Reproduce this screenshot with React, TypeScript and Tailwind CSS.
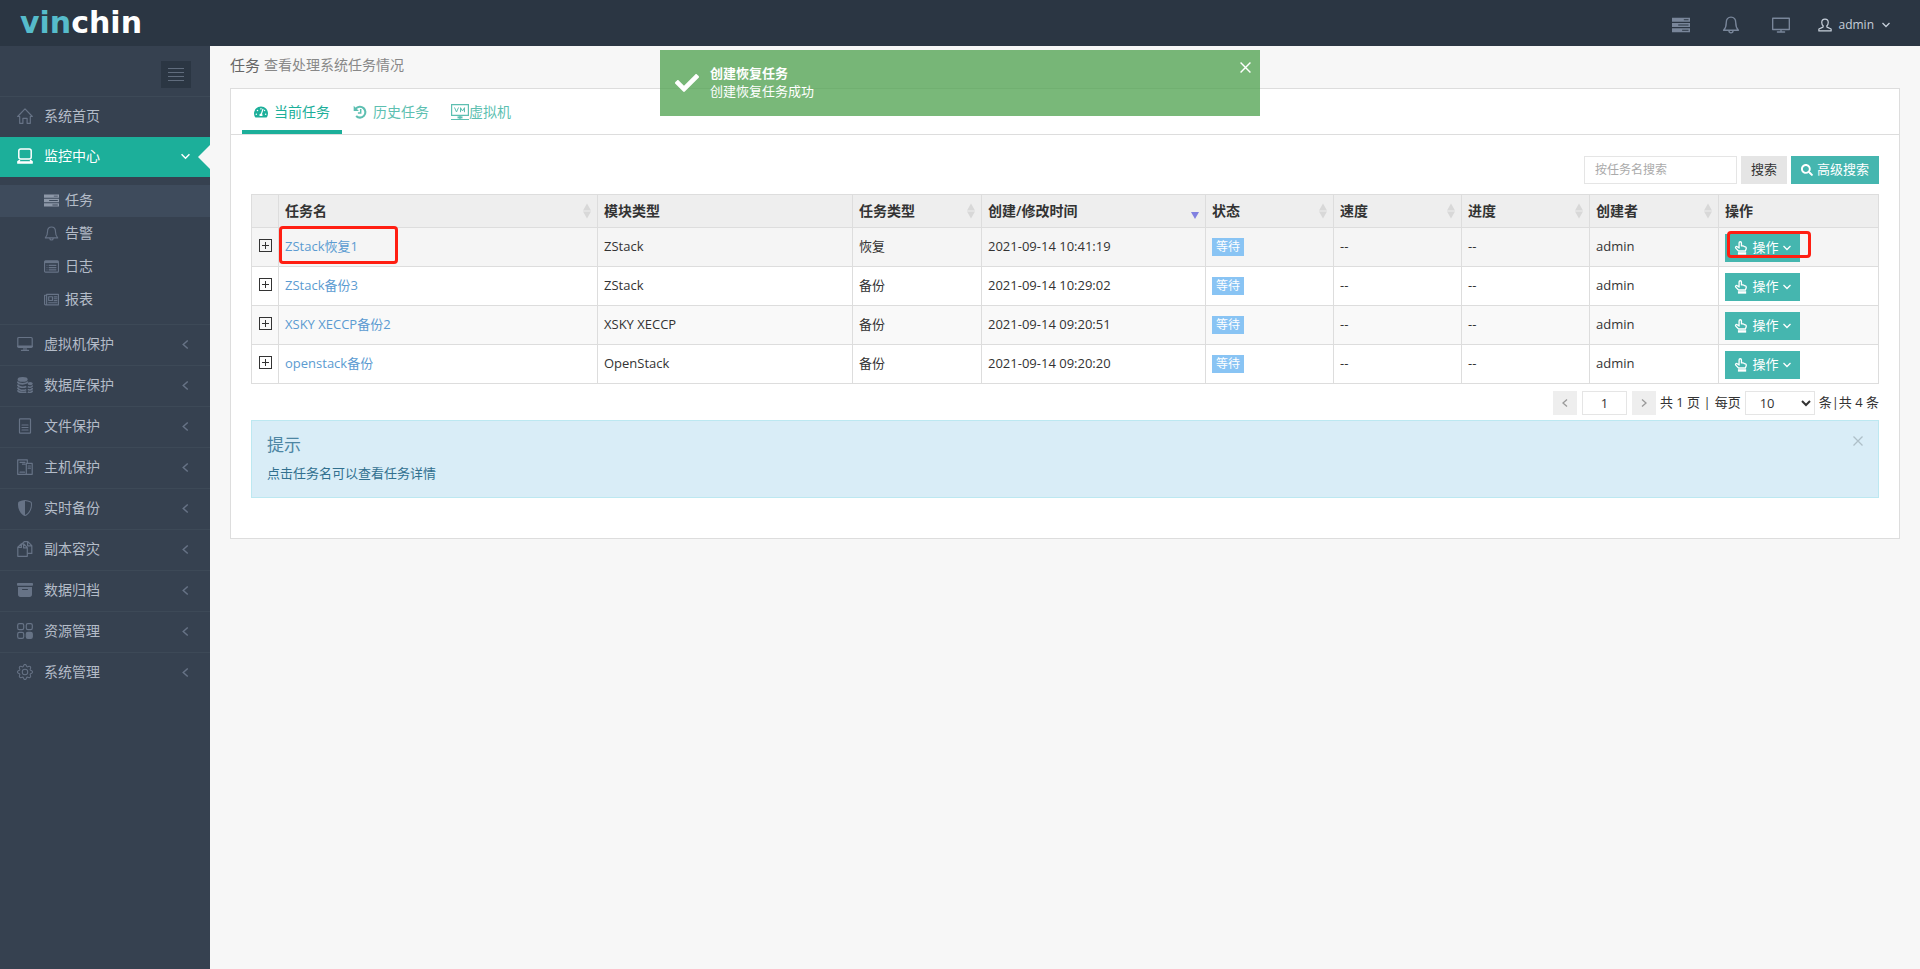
import React from "react";
import { BsArchiveFill, BsGear, BsShieldShaded } from "react-icons/bs";
import { FaCheck, FaSearch, FaTachometerAlt } from "react-icons/fa";

type IconProps = { className?: string };
type IconType = (props: IconProps) => React.ReactElement;

const Svg = ({
  className = "size-4",
  children,
}: IconProps & { children: React.ReactNode }) => (
  <svg
    viewBox="0 0 16 16"
    className={className}
    fill="none"
    stroke="currentColor"
    strokeWidth="1.2"
    strokeLinejoin="round"
    strokeLinecap="round"
    aria-hidden="true"
  >
    {children}
  </svg>
);

const HomeIcon: IconType = (p) => (
  <Svg {...p}>
    <path d="M8 .9.7 8.5h2v6.8h3.2v-5h4.2v5h3.2V8.5h2z" />
  </Svg>
);

const LaptopIcon: IconType = (p) => (
  <Svg {...p}>
    <rect x="1.8" y="1" width="12.4" height="10" rx="2" strokeWidth="1.5" />
    <path d="M2.6 12.4.8 13.6v1.6h14.4v-1.6l-1.800-1.200M1 13.800h14" strokeWidth="1.3" />
  </Svg>
);

const ServerIcon: IconType = (p) => (
  <Svg {...p}>
    <path
      fill="currentColor"
      fillRule="evenodd"
      stroke="none"
      d="M0 1.5h16v3.6H0zM10.5 2.8v1h4.2v-1zM0 6.2h16v3.6H0zM5.5 7.5v1h9.2v-1zM0 10.9h16v3.6H0zM9 12.2v1h5.7v-1z"
    />
  </Svg>
);

const BellIcon: IconType = (p) => (
  <Svg {...p}>
    <path d="M8 1C5.2 1 3.8 3.1 3.8 5.7c0 3.4-.6 5.2-2.4 7h13.2c-1.8-1.8-2.4-3.6-2.4-7C12.2 3.1 10.8 1 8 1zM6.2 13.2a1.8 1.8 0 0 0 3.6 0" />
  </Svg>
);

const ScreenIcon: IconType = (p) => (
  <Svg {...p}>
    <path d="M.6 2h14.8v10H.6zM8 12v2M4.8 14.2h6.4" />
  </Svg>
);

const MonitorIcon: IconType = (p) => (
  <Svg {...p}>
    <rect x=".8" y="1.5" width="14.4" height="9.8" rx="1" />
    <path d="M1 10.3h14" strokeWidth="1.8" />
    <path d="M7 11.5v2.6M9 11.5v2.6M4.5 14.4h7" />
  </Svg>
);

const LogIcon: IconType = (p) => (
  <Svg {...p}>
    <rect x=".6" y="2" width="14.8" height="12" rx="1" />
    <path d="M1 3.2h14" strokeWidth="2.4" strokeLinecap="butt" />
    <path d="M2.8 6.8h.8M5 6.8h8.2M2.8 9.2h.8M5 9.2h8.2M2.8 11.6h.8M5 11.6h8.2" strokeLinecap="butt" />
  </Svg>
);

const ReportIcon: IconType = (p) => (
  <Svg {...p}>
    <path d="M2.8 2.5h12.6v11.2H1.8A1.2 1.2 0 0 1 .6 12.5v-9h2.2zM2.8 3.5v9.2M5 5h4v4H5zM10.8 5.2h3M10.8 7.2h3M10.8 9.2h3M5 11.4h8.8" />
  </Svg>
);

const DatabaseIcon: IconType = (p) => (
  <svg viewBox="0 0 16 16" className={p.className} fill="none" stroke="currentColor" aria-hidden="true">
    <ellipse cx="5.6" cy="2.4" rx="5" ry="2.3" fill="currentColor" stroke="none" />
    <path
      d="M.5 4.6c1 3 9.200 3 10.200 0M.5 7.600c1 3 6 3.200 8.800 1.900M.5 10.600c1 3 5.500 3.200 8.800 2.200M.5 13.300c1 2.400 5.500 2.600 8.800 1.800"
      strokeWidth="1.600"
    />
    <ellipse cx="13.200" cy="6.600" rx="2.600" ry="1.600" fill="currentColor" stroke="none" />
    <path d="M10.800 9.700c1.800 1.200 4.200.4 4.800-1.300M10.800 12.300c1.800 1.200 4.200.4 4.800-1.300M10.800 14.900c1.800 1.200 4.200.4 4.800-1.300" strokeWidth="1.500" />
  </svg>
);

const FileIcon: IconType = (p) => (
  <Svg {...p}>
    <rect x="2.5" y=".8" width="11" height="14.4" rx=".8" />
    <path d="M5 7h6M5 9.5h6M5 12h6" />
  </Svg>
);

const HostIcon: IconType = (p) => (
  <Svg {...p}>
    <path d="M9.5 15.3H.7V.8h9.6v3.4M3 3.3h5M5.5 5.2H8M3 13.2h4.5M9.3 4.4h5.9v10.9H9.3zM11.2 7h2.2M11.2 9.2h2.2" />
  </Svg>
);

// back sheet, then the front sheet, each with its folded corner
const CopyIcon: IconType = (p) => (
  <Svg {...p}>
    <path d="M5.2 2.8v-.2L7.200.7h3.600l4 4v7.700h-4.300M10.600.9v4h4" />
    <path d="M4.200 2.900h2.600l3.500 3.800v8.600H.8V6.200zM4.400 3.200v3.200H1M6.600 3.200v3.700h3.500" />
  </Svg>
);

const GridIcon: IconType = (p) => (
  <Svg {...p}>
    <rect x=".7" y=".7" width="6" height="6" rx="1.6" />
    <rect x="9.3" y=".7" width="6" height="6" rx="1.6" />
    <rect x=".7" y="9.3" width="6" height="6" rx="1.6" />
    <rect x="9.3" y="9.3" width="6" height="6" rx="1.6" fill="currentColor" />
  </Svg>
);

const UserIcon: IconType = (p) => (
  <Svg {...p}>
    <path
      d="M8 1.2c-2.3 0-3.7 1.7-3.7 3.9 0 1.8.7 3 1.7 4l-.3 1.3L1 12.6v2.2h14v-2.2l-4.7-2.2L10 9.1c1-1 1.7-2.2 1.7-4C11.7 2.9 10.3 1.2 8 1.2z"
      strokeWidth="1.4"
    />
  </Svg>
);

const HistoryIcon: IconType = (p) => (
  <svg viewBox="0 0 16 16" className={p.className} fill="none" stroke="currentColor" aria-hidden="true">
    <path d="M3.2 4.2A6.2 6.2 0 1 1 3.6 12.6" strokeWidth="2.4" />
    <path d="M.8.8v6h6z" fill="currentColor" stroke="none" />
    <path d="M8.8 4.5v4.7H5.6" strokeWidth="1.7" />
  </svg>
);

const HandIcon: IconType = (p) => (
  <svg
    viewBox="0 0 16 16"
    className={p.className}
    fill="none"
    stroke="currentColor"
    strokeWidth="1.5"
    strokeLinejoin="round"
    aria-hidden="true"
  >
    <path d="M5.2 11.4 2 8.1C1.2 7 2.6 5.7 3.8 6.6L5.8 8V2.2c0-1.8 2.7-1.8 2.7 0v3.4c2.2-.3 3 .2 3.2.8 1.6-.1 2.3.7 2.3 1.8 0 1.4-.9 2-.9 3.2z" />
    <path d="M4.5 14.2h9.4" strokeWidth="2.8" />
  </svg>
);

const VmIcon: IconType = (p) => (
  <svg
    viewBox="0 0 18 18"
    className={p.className}
    fill="none"
    stroke="currentColor"
    aria-hidden="true"
  >
    <path d="M.6 1.6h16.8v10.8H.6zM0 16.5h18M9 13v3" strokeWidth="1.2" />
    <path d="M6.5 14.4h5" strokeWidth="2" />
    <path d="M3.5 4.5 5.5 9l2-4.500M9.500 9.200V4.700l2 3.300 2-3.300v4.500" />
  </svg>
);

const Chevron = ({
  dir,
  className = "size-2",
}: IconProps & { dir: "left" | "right" | "down" }) => {
  const paths = {
    left: "M6 .5 2 4l4 3.5",
    right: "M2 .5 6 4 2 7.5",
    down: "M.5 2 4 5.5 7.5 2",
  };
  return (
    <svg
      viewBox="0 0 8 8"
      className={className}
      fill="none"
      stroke="currentColor"
      strokeWidth="1.3"
      aria-hidden="true"
    >
      <path d={paths[dir]} />
    </svg>
  );
};

const Cross = ({ className }: IconProps) => (
  <svg viewBox="0 0 10 10" className={className} fill="none" stroke="currentColor" strokeWidth="1.3" aria-hidden="true">
    <path d="m.5.5 9 9M9.5.5l-9 9" />
  </svg>
);

const subMenu: { label: string; Icon: IconType; active?: boolean }[] = [
  { label: "任务", Icon: ServerIcon, active: true },
  { label: "告警", Icon: BellIcon },
  { label: "日志", Icon: LogIcon },
  { label: "报表", Icon: ReportIcon },
];

const menu: { label: string; Icon: React.ElementType }[] = [
  { label: "虚拟机保护", Icon: MonitorIcon },
  { label: "数据库保护", Icon: DatabaseIcon },
  { label: "文件保护", Icon: FileIcon },
  { label: "主机保护", Icon: HostIcon },
  { label: "实时备份", Icon: BsShieldShaded },
  { label: "副本容灾", Icon: CopyIcon },
  { label: "数据归档", Icon: BsArchiveFill },
  { label: "资源管理", Icon: GridIcon },
  { label: "系统管理", Icon: BsGear },
];

const columns: { label: string; width: string; sort?: "both" | "desc" }[] = [
  { label: "任务名", width: "", sort: "both" },
  { label: "模块类型", width: "w-[255px]" },
  { label: "任务类型", width: "w-[129px]", sort: "both" },
  { label: "创建/修改时间", width: "w-56", sort: "desc" },
  { label: "状态", width: "w-32", sort: "both" },
  { label: "速度", width: "w-32", sort: "both" },
  { label: "进度", width: "w-32", sort: "both" },
  { label: "创建者", width: "w-[129px]", sort: "both" },
  { label: "操作", width: "w-40" },
];

const tasks = [
  { name: "ZStack恢复1", module: "ZStack", type: "恢复", time: "2021-09-14 10:41:19", bg: "bg-[#f5f5f5]", marked: true },
  { name: "ZStack备份3", module: "ZStack", type: "备份", time: "2021-09-14 10:29:02", bg: "bg-white" },
  { name: "XSKY XECCP备份2", module: "XSKY XECCP", type: "备份", time: "2021-09-14 09:20:51", bg: "bg-[#f9f9f9]" },
  { name: "openstack备份", module: "OpenStack", type: "备份", time: "2021-09-14 09:20:20", bg: "bg-white" },
];

const Header = () => (
  <header className="flex h-[46px] shrink-0 items-center justify-between bg-[#2b3643] pl-5 pr-[30px]">
    <a
      href="#"
      className="font-['DejaVu_Sans'] text-[30px] font-bold leading-none text-white"
    >
      <span className="text-[#56bccb]">vin</span>chin
    </a>
    <div className="flex items-center gap-8 pb-1 pt-2 text-[#79869a]">
      <button aria-label="任务">
        <ServerIcon className="size-[18px]" />
      </button>
      <button aria-label="告警">
        <BellIcon className="size-[18px]" />
      </button>
      <button aria-label="大屏">
        <ScreenIcon className="size-[18px]" />
      </button>
      <button className="-ml-1 flex items-center text-[#c6cfda]">
        <UserIcon className="mr-1.5 size-3.5" />
        <span className="text-xs">admin</span>
        <Chevron dir="down" className="ml-2 size-2" />
      </button>
    </div>
  </header>
);

const Sidebar = () => (
  <nav className="w-[210px] shrink-0 bg-[#364150] text-sm text-[#b4bcc8]">
    <div className="flex justify-end pb-2 pr-[19px] pt-[15px]">
      <button
        aria-label="菜单"
        className="flex h-[27px] w-[30px] flex-col items-center justify-center gap-[3px] bg-[#2b3643]"
      >
        <span className="h-px w-4 bg-[#606c7d]" />
        <span className="h-px w-4 bg-[#606c7d]" />
        <span className="h-px w-4 bg-[#606c7d]" />
        <span className="h-px w-4 bg-[#606c7d]" />
      </button>
    </div>
    <a href="#" className="flex h-[41px] items-center border-t border-[#3d4957] pb-0.5 pl-[17px]">
      <HomeIcon className="mr-[11px] size-4 text-[#677386]" />
      系统首页
    </a>
    <a href="#" className="relative flex h-10 items-center bg-[#1caf9a] pb-0.5 pl-[17px] text-white">
      <LaptopIcon className="mr-[11px] size-4" />
      监控中心
      <Chevron dir="down" className="ml-auto mr-5 size-[9px]" />
      <span className="absolute right-0 top-2 h-6 w-3 bg-[#f7f7f7] [clip-path:polygon(100%_0,100%_100%,0_50%)]" />
    </a>
    <ul className="pb-[7px] pt-2">
      {subMenu.map(({ label, Icon, active }) => (
        <li key={label} className="pb-px">
          <a
            href="#"
            className={
              active
                ? "flex h-8 items-center bg-[#3e4b5c] pb-0.5 pl-11"
                : "flex h-8 items-center pb-0.5 pl-11"
            }
          >
            <Icon
              className={
                active ? "mr-1.5 size-[15px] text-[#8d98a8]" : "mr-1.5 size-[15px] text-[#677386]"
              }
            />
            {label}
          </a>
        </li>
      ))}
    </ul>
    {menu.map(({ label, Icon }) => (
      <a
        key={label}
        href="#"
        className="flex h-[41px] items-center border-t border-[#3d4957] pb-0.5 pl-[17px]"
      >
        <Icon className="mr-[11px] size-4 text-[#677386]" />
        {label}
        <Chevron dir="left" className="ml-auto mr-5 size-[9px] text-[#677386]" />
      </a>
    ))}
  </nav>
);

const SortMark = ({ sort }: { sort: "both" | "desc" }) => (
  <svg viewBox="0 0 8 16" className="h-4 w-2 shrink-0" aria-hidden="true">
    {sort === "both" && (
      <>
        <path d="M4 .5 8 7.5H0z" fill="#d8d8d8" />
        <path d="M4 15.5 8 8.5H0z" fill="#d8d8d8" />
      </>
    )}
    {sort === "desc" && <path d="M4 16 8 9H0z" fill="#8080e0" />}
  </svg>
);

const TaskTable = () => (
  <table className="w-full table-fixed border-collapse text-[13px] text-[#333]">
    <thead>
      <tr className="h-[33px] bg-[#eee] text-left text-sm">
        <th className="w-[27px] border border-[#ddd]" />
        {columns.map(({ label, width, sort }) => (
          <th key={label} className={`border border-[#ddd] px-1.5 font-semibold ${width}`}>
            <div className="flex items-center justify-between">
              {label}
              {sort && <SortMark sort={sort} />}
            </div>
          </th>
        ))}
      </tr>
    </thead>
    <tbody>
      {tasks.map((task) => (
        <tr key={task.name} className={`h-[39px] ${task.bg}`}>
          <td className="border border-[#ddd]">
            <button
              aria-label="展开"
              className="mx-auto mb-1 flex size-[13px] items-center justify-center border border-[#333]"
            >
              <svg viewBox="0 0 7 7" className="size-[7px]" stroke="#333" aria-hidden="true">
                <path d="M0 3.5h7M3.5 0v7" />
              </svg>
            </button>
          </td>
          <td className="relative border border-[#ddd] px-1.5">
            <a href="#" className="text-[#5b9bd1]">
              {task.name}
            </a>
            {task.marked && (
              <span className="absolute -top-0.5 left-0 h-[38px] w-[119px] rounded border-3 border-[#ff1e12]" />
            )}
          </td>
          <td className="border border-[#ddd] px-1.5">{task.module}</td>
          <td className="border border-[#ddd] px-1.5">{task.type}</td>
          <td className="border border-[#ddd] px-1.5">{task.time}</td>
          <td className="border border-[#ddd] px-1.5">
            <span className="flex h-[18px] w-8 items-center justify-center bg-[#89c4f4] text-xs text-white">
              等待
            </span>
          </td>
          <td className="border border-[#ddd] px-1.5">--</td>
          <td className="border border-[#ddd] px-1.5">--</td>
          <td className="border border-[#ddd] px-1.5">admin</td>
          <td className="relative border border-[#ddd] px-1.5">
            <button className="mt-px flex h-7 w-[75px] items-center justify-center gap-1 bg-[#45b6af] text-white">
              <HandIcon className="size-3.5" />
              操作
              <Chevron dir="down" className="size-2" />
            </button>
            {task.marked && (
              <span className="absolute left-2 top-[3px] h-[27px] w-[84px] rounded border-3 border-[#ff1e12]" />
            )}
          </td>
        </tr>
      ))}
    </tbody>
  </table>
);

const Pagination = () => (
  <div className="mt-[7px] flex h-6 items-center justify-end text-[13px] text-[#333]">
    <button aria-label="上一页" className="flex h-6 w-6 items-center justify-center bg-[#eee] text-[#999]">
      <Chevron dir="left" />
    </button>
    <input
      aria-label="页码"
      defaultValue="1"
      className="mx-[5px] h-6 w-[45px] border border-[#e5e5e5] bg-white text-center"
    />
    <button aria-label="下一页" className="mr-1 flex h-6 w-6 items-center justify-center bg-[#eee] text-[#999]">
      <Chevron dir="right" />
    </button>
    <span>共 1 页 |</span>
    <label htmlFor="page-size" className="mx-1">
      每页
    </label>
    <select
      id="page-size"
      defaultValue="10"
      className="mr-1 h-6 w-[70px] border border-[#e5e5e5] bg-white pl-2.5"
    >
      <option>10</option>
      <option>20</option>
      <option>50</option>
    </select>
    <span>条|共 4 条</span>
  </div>
);

const Toast = () => (
  <div
    role="status"
    className="absolute left-1/2 top-[50px] flex h-[66px] w-[600px] -translate-x-1/2 items-center bg-[#51a351]/77 pl-[15px] text-[13px] leading-[18px] text-white"
  >
    <FaCheck className="mr-[11px] size-6" />
    <div className="pb-0.5">
      <div className="font-bold">创建恢复任务</div>
      <div>创建恢复任务成功</div>
    </div>
    <button aria-label="关闭" className="absolute right-[9px] top-3">
      <Cross className="size-[11px]" />
    </button>
  </div>
);

const App = () => {
  return (
    <div className="relative flex min-h-screen flex-col bg-[#f7f7f7] font-['Open_Sans','Noto_Sans_CJK_SC',sans-serif]">
      <Header />
      <div className="flex grow">
        <Sidebar />
        <main className="min-w-0 grow px-5">
          <h1 className="flex h-[42px] items-center gap-1 pb-1 text-[15px] text-[#666]">
            任务
            <small className="text-sm text-[#888]">查看处理系统任务情况</small>
          </h1>
          <section className="border border-[#ddd] bg-white">
            <div className="flex h-[46px] border-b border-[#ddd] pl-[11px] text-sm text-[#5dbfb1]">
              <a
                href="#"
                className="flex items-center gap-1.5 border-b-4 border-[#1caf9a] px-3 pt-1 text-[#1caf9a]"
              >
                <FaTachometerAlt className="size-3.5" />
                当前任务
              </a>
              <a href="#" className="flex items-center gap-1.5 px-[11px]">
                <HistoryIcon className="size-3.5" />
                历史任务
              </a>
              <a href="#" className="flex items-center px-[11px]">
                <VmIcon className="size-[18px]" />
                虚拟机
              </a>
            </div>
            <div className="px-5 pb-10 pt-[21px]">
              <form className="mb-2.5 flex h-7 justify-end gap-1 text-[13px]">
                <input
                  type="text"
                  aria-label="按任务名搜索"
                  placeholder="按任务名搜索"
                  className="w-[153px] border border-[#e5e5e5] px-2.5 text-xs placeholder:text-[#aaa]"
                />
                <button type="button" className="w-[46px] bg-[#e5e5e5] text-[#333]">
                  搜索
                </button>
                <button
                  type="button"
                  className="flex w-[88px] items-center justify-center gap-1 bg-[#45b6af] text-white"
                >
                  <FaSearch className="size-3" />
                  高级搜索
                </button>
              </form>
              <TaskTable />
              <Pagination />
              <div className="relative mt-[5px] h-[78px] border border-[#bce8f1] bg-[#d9edf7] px-[15px] pt-3 text-[#31708f]">
                <h4 className="text-[17px] leading-6 text-[#4d86a3]">提示</h4>
                <p className="mt-1.5 text-[13px] leading-5">点击任务名可以查看任务详情</p>
                <button aria-label="关闭" className="absolute right-[15px] top-[15px] text-[#aebfc8]">
                  <Cross className="size-2.5" />
                </button>
              </div>
            </div>
          </section>
        </main>
      </div>
      <Toast />
    </div>
  );
};

export default App;
